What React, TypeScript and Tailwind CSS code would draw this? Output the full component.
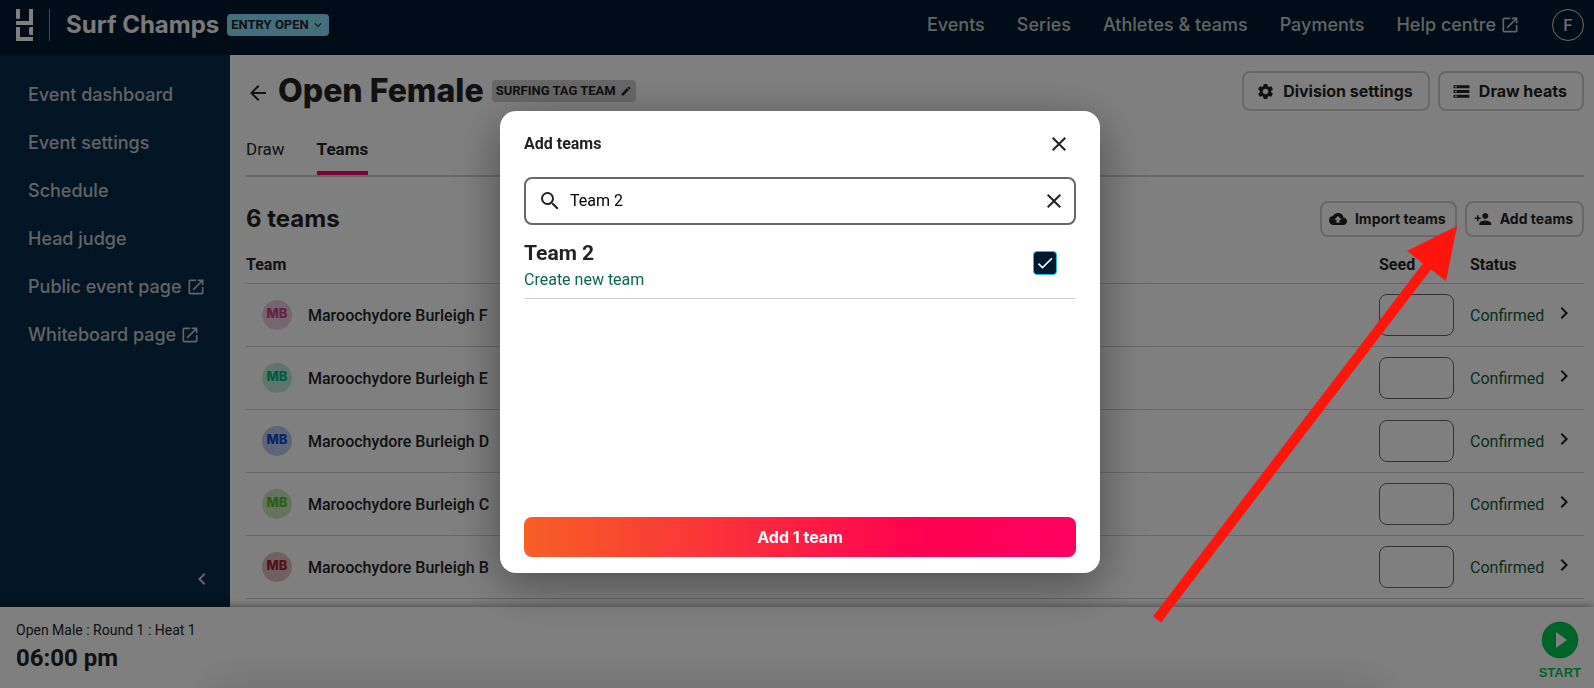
import { useState } from "react";
import {
  MdArrowBack,
  MdBackup,
  MdCheck,
  MdChevronLeft,
  MdChevronRight,
  MdClose,
  MdEdit,
  MdExpandMore,
  MdOpenInNew,
  MdPersonAdd,
  MdSearch,
  MdSettings,
  MdStorage,
} from "react-icons/md";

const navLinks = [
  { label: "Events" },
  { label: "Series" },
  { label: "Athletes & teams" },
  { label: "Payments" },
  { label: "Help centre", external: true },
];

const sideLinks = [
  { label: "Event dashboard" },
  { label: "Event settings" },
  { label: "Schedule" },
  { label: "Head judge" },
  { label: "Public event page", external: true },
  { label: "Whiteboard page", external: true },
];

const teams = [
  { name: "Maroochydore Burleigh F", avatar: "bg-[#ecccdc] text-[#c0468a]" },
  { name: "Maroochydore Burleigh E", avatar: "bg-[#bcecdc] text-[#00b87c]" },
  { name: "Maroochydore Burleigh D", avatar: "bg-[#bccaf0] text-[#0a4cc8]" },
  { name: "Maroochydore Burleigh C", avatar: "bg-[#c8e8bc] text-[#5cb838]" },
  { name: "Maroochydore Burleigh B", avatar: "bg-[#e0c0c2] text-[#a4222c]" },
];

function Logo() {
  return (
    <svg width="17" height="32" viewBox="0 0 17 32" fill="#fff" aria-hidden="true">
      <path d="M0 0h4v8.500a1.500 1.500 0 0 1-1.500 1.500H1.500A1.500 1.500 0 0 1 0 8.500z" />
      <path d="M13 0h4v16H0v-4h13z" />
      <path d="M0 18h4v10h13v4H0z" />
      <path d="M14.500 18H17v8h-2.500a1.500 1.500 0 0 1-1.500-1.500v-5a1.500 1.500 0 0 1 1.500-1.500z" />
    </svg>
  );
}

function Header() {
  return (
    <header className="flex h-[55px] shrink-0 items-center bg-[#001830] px-4 pb-1.5 pr-2.5 text-white">
      <Logo />
      <div className="ml-4 h-8 w-px bg-[#8a96a3]" />
      <span className="ml-4 text-2xl font-bold text-[#f4f4f4]">Surf Champs</span>
      <button className="ml-2 flex h-[22px] items-center gap-0.5 rounded bg-[#86def9] px-1 font-[Roboto] text-[13px] font-bold text-[#222]">
        ENTRY OPEN
        <MdExpandMore size={14} />
      </button>
      <nav className="ml-auto flex items-center gap-8 text-lg font-medium text-[#c4c8cc]">
        {navLinks.map((l) => (
          <a key={l.label} href="#" className="flex items-center gap-1">
            {l.label}
            {l.external && <MdOpenInNew size={20} />}
          </a>
        ))}
        <button className="flex size-8 items-center justify-center rounded-full border border-[#e0e0e0] text-base text-[#e0e0e0]">
          F
        </button>
      </nav>
    </header>
  );
}

function Sidebar() {
  return (
    <aside className="flex w-[230px] shrink-0 flex-col bg-[#042a48] pt-4 text-lg font-medium text-[#c4c8cc]">
      {sideLinks.map((l) => (
        <a key={l.label} href="#" className="flex h-12 items-center gap-1 pl-7">
          {l.label}
          {l.external && <MdOpenInNew size={20} />}
        </a>
      ))}
      <button aria-label="Collapse menu" className="mb-4 mr-4 mt-auto self-end">
        <MdChevronLeft size={24} />
      </button>
    </aside>
  );
}

function TeamTable() {
  return (
    <table className="w-full font-[Roboto] text-base text-[#222]">
      <thead>
        <tr className="h-[38px] border-b border-[#cfcfcf] text-left">
          <th className="pt-0.5 font-bold">Team</th>
          <th className="w-[91px] pt-0.5 font-bold">Seed</th>
          <th className="w-[82px] pt-0.5 font-bold">Status</th>
          <th className="w-8" aria-label="Open" />
        </tr>
      </thead>
      <tbody>
        {teams.map((t) => (
          <tr key={t.name} className="h-[63px] border-b border-[#cfcfcf]">
            <td>
              <div className="flex items-center gap-4 pl-4 font-medium">
                <span
                  className={`flex size-[30px] items-center justify-center rounded-full pb-0.5 font-[Inter] text-[13px] font-extrabold ${t.avatar}`}
                >
                  MB
                </span>
                <span className="pt-0.5">{t.name}</span>
              </div>
            </td>
            <td>
              <input
                aria-label={`Seed for ${t.name}`}
                className="block h-[42px] w-[75px] rounded-lg border border-[#666] bg-white px-2"
              />
            </td>
            <td className="pt-0.5 text-[#115c3c]">Confirmed</td>
            <td className="pb-1">
              <button aria-label={`Open ${t.name}`} className="block">
                <MdChevronRight size={24} />
              </button>
            </td>
          </tr>
        ))}
      </tbody>
    </table>
  );
}

function Division() {
  return (
    <main className="flex min-w-0 flex-1 flex-col bg-white px-4 pr-2.5 pt-4 text-[#222]">
      <div className="flex h-10 items-center">
        <button aria-label="Back" className="mr-2 pt-1">
          <MdArrowBack size={24} />
        </button>
        <h1 className="text-[32px] font-extrabold">Open Female</h1>
        <button className="ml-2 flex h-[22px] items-center gap-1 rounded bg-[#d0d0d0] px-1 font-[Roboto] text-[13px] font-bold">
          SURFING TAG TEAM
          <MdEdit size={12} />
        </button>
        <div className="ml-auto flex gap-2 text-base font-bold">
          <button className="flex h-10 items-center gap-2 rounded-lg border-2 border-[#cfcfcf] px-3 pr-[15px]">
            <MdSettings size={19} />
            Division settings
          </button>
          <button className="flex h-10 items-center gap-2 rounded-lg border-2 border-[#cfcfcf] px-3 pr-[15px]">
            <MdStorage size={19} />
            Draw heats
          </button>
        </div>
      </div>
      <div className="mt-4 flex h-[50px] gap-8 border-b-2 border-[#cfcfcf] font-[Roboto] text-[17px]">
        <button className="pb-0.5">Draw</button>
        <button className="-mt-0.5 border-b-4 border-[#ff0062] pt-1 font-bold">Teams</button>
      </div>
      <div className="mt-6 flex h-9 items-center">
        <h2 className="text-2xl font-bold">6 teams</h2>
        <div className="ml-auto flex gap-2 text-sm font-bold">
          <button className="flex h-9 items-center gap-2 rounded-lg border-2 border-[#cfcfcf] pl-[7px] pr-[9px]">
            <MdBackup size={18} />
            Import teams
          </button>
          <button className="flex h-9 items-center gap-2 rounded-lg border-2 border-[#cfcfcf] pl-[7px] pr-[9px]">
            <MdPersonAdd size={18} />
            Add teams
          </button>
        </div>
      </div>
      <div className="mt-2">
        <TeamTable />
      </div>
    </main>
  );
}

function HeatBar() {
  return (
    <footer className="relative flex h-[81px] shrink-0 items-center justify-between overflow-hidden bg-white px-4 pr-[13px] text-[#222] shadow-[0_0_8px_rgba(0,0,0,0.5)]">
      <div className="absolute inset-x-[210px] top-full h-10 shadow-[0_0_48px_rgba(0,0,0,0.18)]" />
      <div className="pb-0.5 font-[Roboto]">
        <div className="text-sm">Open Male : Round 1 : Heat 1</div>
        <div className="pt-0.5 text-2xl font-bold">06:00 pm</div>
      </div>
      <button className="flex flex-col items-center gap-1 pt-2 font-['Liberation_Sans'] text-[13px] font-bold text-[#00c853]">
        <svg width="38" height="38" viewBox="0 0 38 38" aria-hidden="true">
          <circle cx="19" cy="19" r="18.300" fill="#00c853" />
          <path d="M15 11v16l11-8z" fill="#fff" />
        </svg>
        START
      </button>
    </footer>
  );
}

function AddTeamsDialog() {
  const [query, setQuery] = useState("Team 2");
  const [checked, setChecked] = useState(true);
  return (
    <div className="fixed inset-0 flex items-center justify-center bg-black/50 pb-1 pl-1.5">
      <section
        role="dialog"
        aria-label="Add teams"
        className="flex min-h-[462px] w-[600px] flex-col rounded-2xl bg-white px-6 pb-4 pt-4 font-[Roboto] text-[#222] shadow-[0_12px_48px_rgba(0,0,0,0.4)]"
      >
        <div className="flex h-[34px] items-center justify-between pr-[5px]">
          <h2 className="text-base font-bold">Add teams</h2>
          <button aria-label="Close">
            <MdClose size={24} />
          </button>
        </div>
        <div className="mt-4 flex h-12 items-center gap-2 rounded-lg border-2 border-[#696969] pl-3 pr-2">
          <MdSearch size={24} />
          <input
            aria-label="Search teams"
            value={query}
            onChange={(e) => setQuery(e.target.value)}
            className="min-w-0 flex-1 text-base text-black outline-none"
          />
          <button aria-label="Clear search" onClick={() => setQuery("")}>
            <MdClose size={24} />
          </button>
        </div>
        <label className="flex items-start justify-between border-b border-[#cfcfcf] pb-1.5 pr-[19px] pt-3.5">
          <span>
            <span className="block text-[21px] leading-7 font-bold">Team 2</span>
            <span className="block pt-px text-base text-[#0b6650]">Create new team</span>
          </span>
          <span className="relative mt-3 flex size-6">
            <input
              type="checkbox"
              checked={checked}
              onChange={(e) => setChecked(e.target.checked)}
              className="size-6 appearance-none rounded border border-[#29b6f6] checked:bg-[#001830]"
            />
            {checked && (
              <MdCheck size={20} className="pointer-events-none absolute inset-0 m-auto text-white" />
            )}
          </span>
        </label>
        <button className="mt-auto h-10 rounded-lg bg-[linear-gradient(90deg,#f75f26_0%,#ff0050_73%,#ff0062_100%)] font-[Inter] text-base font-bold text-white">
          Add 1 team
        </button>
      </section>
    </div>
  );
}

function PointerArrow() {
  return (
    <svg
      className="pointer-events-none absolute right-[136px] top-[226px]"
      width="305"
      height="397"
      viewBox="0 0 305 397"
      aria-hidden="true"
    >
      <path d="M304 0 254 25 270 37.500 0 390.500 8 396.500 278 43.500 293 55z" fill="#ff150b" />
    </svg>
  );
}

export default function App() {
  return (
    <div className="relative flex min-h-screen flex-col font-[Inter]">
      <Header />
      <div className="flex flex-1">
        <Sidebar />
        <Division />
      </div>
      <HeatBar />
      <AddTeamsDialog />
      <PointerArrow />
    </div>
  );
}
